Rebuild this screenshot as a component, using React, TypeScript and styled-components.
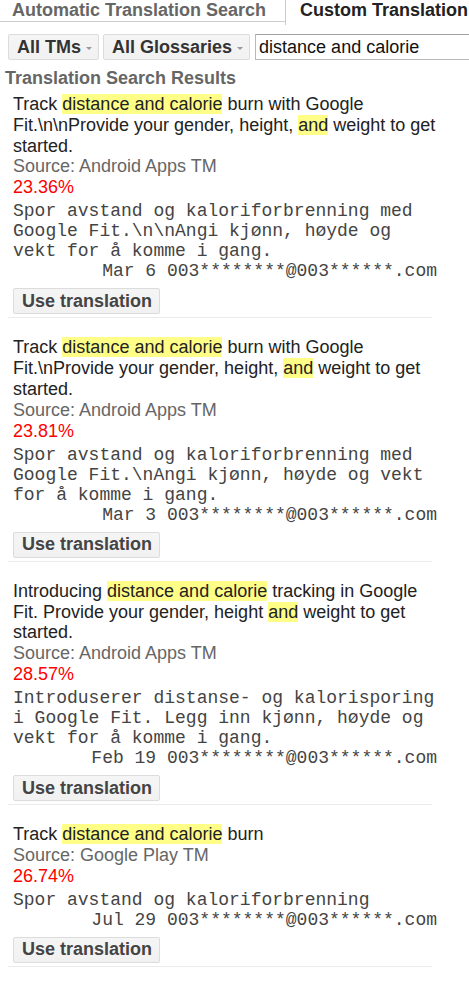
import React from "react";
import styled, { createGlobalStyle } from "styled-components";

const GlobalStyle = createGlobalStyle`
  html, body { margin: 0; padding: 0; background: #fff; }
  body { font-family: Arial, "Liberation Sans", sans-serif; overflow: hidden; }
  * { box-sizing: border-box; }
`;

const Page = styled.div`
  width: 469px;
  height: 982px;
  overflow: hidden;
  position: relative;
`;

const TabBar = styled.div`
  display: flex;
  align-items: flex-start;
  white-space: nowrap;
`;

const Tab = styled.div<{ $active?: boolean }>`
  font-size: 18px;
  font-weight: bold;
  line-height: 21px;
  flex-shrink: 0;
  color: ${(p) => (p.$active ? "#222" : "#666")};
  ${(p) =>
    p.$active
      ? `height: 25px; border-left: 1px solid #ccc; padding-left: 14px; padding-top: 0;`
      : `height: 22px; border-bottom: 1px solid #ccc; padding: 0 19px 0 12px;`}
`;

const Toolbar = styled.div`
  display: flex;
  align-items: center;
  margin-top: 9px;
  padding-left: 8px;
  white-space: nowrap;
`;

const DropButton = styled.div<{ $gap?: number }>`
  display: flex;
  align-items: center;
  flex-shrink: 0;
  height: 26px;
  padding: 0 6px 0 8px;
  margin-right: ${(p) => p.$gap ?? 4}px;
  background: linear-gradient(#f5f5f5, #f1f1f1);
  border: 1px solid #dcdcdc;
  border-radius: 2px;
  font-size: 18px;
  font-weight: bold;
  color: #333;
`;

const Arrow = styled.span`
  display: inline-block;
  margin-left: 5px;
  margin-top: 2px;
  width: 0;
  height: 0;
  border-left: 3px solid transparent;
  border-right: 3px solid transparent;
  border-top: 3px solid #999;
`;

const SearchInput = styled.div`
  flex-shrink: 0;
  width: 260px;
  height: 26px;
  border: 1px solid #b9b9b9;
  border-top-color: #a0a0a0;
  padding-left: 3px;
  font-size: 18px;
  line-height: 24px;
  color: #111;
`;

const Heading = styled.div`
  margin-top: 8px;
  padding-left: 5px;
  font-size: 18px;
  font-weight: bold;
  line-height: 21px;
  color: #666;
`;

const List = styled.div`
  margin-top: 5px;
  margin-left: 8px;
  width: 424px;
`;

const Item = styled.div`
  border-bottom: 1px solid #ebebeb;
  padding-bottom: 3px;
  margin-bottom: 19px;
`;

const Body = styled.div`
  margin-left: 5px;
  width: 424px;
`;

const Title = styled.div`
  font-size: 18px;
  line-height: 20.8px;
  color: #222;
`;

const Mark = styled.span`
  background: #ffff88;
`;

const Source = styled.div`
  font-size: 18px;
  line-height: 21px;
  color: #666;
`;

const Score = styled.div`
  font-size: 18px;
  line-height: 21px;
  color: #f00;
`;

const Target = styled.div`
  margin-top: 3px;
  font-family: "Liberation Mono", "Courier New", monospace;
  font-size: 18px;
  line-height: 20px;
  color: #444;
`;

const Meta = styled.div`
  text-align: right;
  white-space: nowrap;
`;

const UseButton = styled.div`
  display: inline-flex;
  align-items: center;
  margin-top: 7px;
  height: 26px;
  padding: 0 7px 0 8px;
  background: linear-gradient(#f5f5f5, #f1f1f1);
  border: 1px solid #dcdcdc;
  border-radius: 2px;
  font-size: 18px;
  font-weight: bold;
  color: #444;
`;

type Part = string | { hl: string };

interface Result {
  title: Part[];
  source: string;
  score: string;
  target: string;
  meta: string;
}

const results: Result[] = [
  {
    title: [
      "Track ",
      { hl: "distance and calorie" },
      " burn with Google Fit.\\n\\nProvide your gender, height, ",
      { hl: "and" },
      " weight to get started.",
    ],
    source: "Source: Android Apps TM",
    score: "23.36%",
    target: "Spor avstand og kaloriforbrenning med Google Fit.\\n\\nAngi kjønn, høyde og vekt for å komme i gang.",
    meta: "Mar 6 003********@003******.com",
  },
  {
    title: [
      "Track ",
      { hl: "distance and calorie" },
      " burn with Google Fit.\\nProvide your gender, height, ",
      { hl: "and" },
      " weight to get started.",
    ],
    source: "Source: Android Apps TM",
    score: "23.81%",
    target: "Spor avstand og kaloriforbrenning med Google Fit.\\nAngi kjønn, høyde og vekt for å komme i gang.",
    meta: "Mar 3 003********@003******.com",
  },
  {
    title: [
      "Introducing ",
      { hl: "distance and calorie" },
      " tracking in Google Fit. Provide your gender, height ",
      { hl: "and" },
      " weight to get started.",
    ],
    source: "Source: Android Apps TM",
    score: "28.57%",
    target: "Introduserer distanse- og kalorisporing i Google Fit. Legg inn kjønn, høyde og vekt for å komme i gang.",
    meta: "Feb 19 003********@003******.com",
  },
  {
    title: ["Track ", { hl: "distance and calorie" }, " burn"],
    source: "Source: Google Play TM",
    score: "26.74%",
    target: "Spor avstand og kaloriforbrenning",
    meta: "Jul 29 003********@003******.com",
  },
];

export default function App() {
  return (
    <Page>
      <GlobalStyle />
      <TabBar>
        <Tab>Automatic Translation Search</Tab>
        <Tab $active>Custom Translation</Tab>
      </TabBar>
      <Toolbar>
        <DropButton>
          All TMs
          <Arrow />
        </DropButton>
        <DropButton $gap={5}>
          All Glossaries
          <Arrow />
        </DropButton>
        <SearchInput>distance and calorie</SearchInput>
      </Toolbar>
      <Heading>Translation Search Results</Heading>
      <List>
        {results.map((r, i) => (
          <Item key={i}>
            <Body>
              <Title>
                {r.title.map((p, j) =>
                  typeof p === "string" ? <React.Fragment key={j}>{p}</React.Fragment> : <Mark key={j}>{p.hl}</Mark>
                )}
              </Title>
              <Source>{r.source}</Source>
              <Score>{r.score}</Score>
              <Target>
                {r.target}
                <Meta>{r.meta}</Meta>
              </Target>
              <UseButton>Use translation</UseButton>
            </Body>
          </Item>
        ))}
      </List>
    </Page>
  );
}
